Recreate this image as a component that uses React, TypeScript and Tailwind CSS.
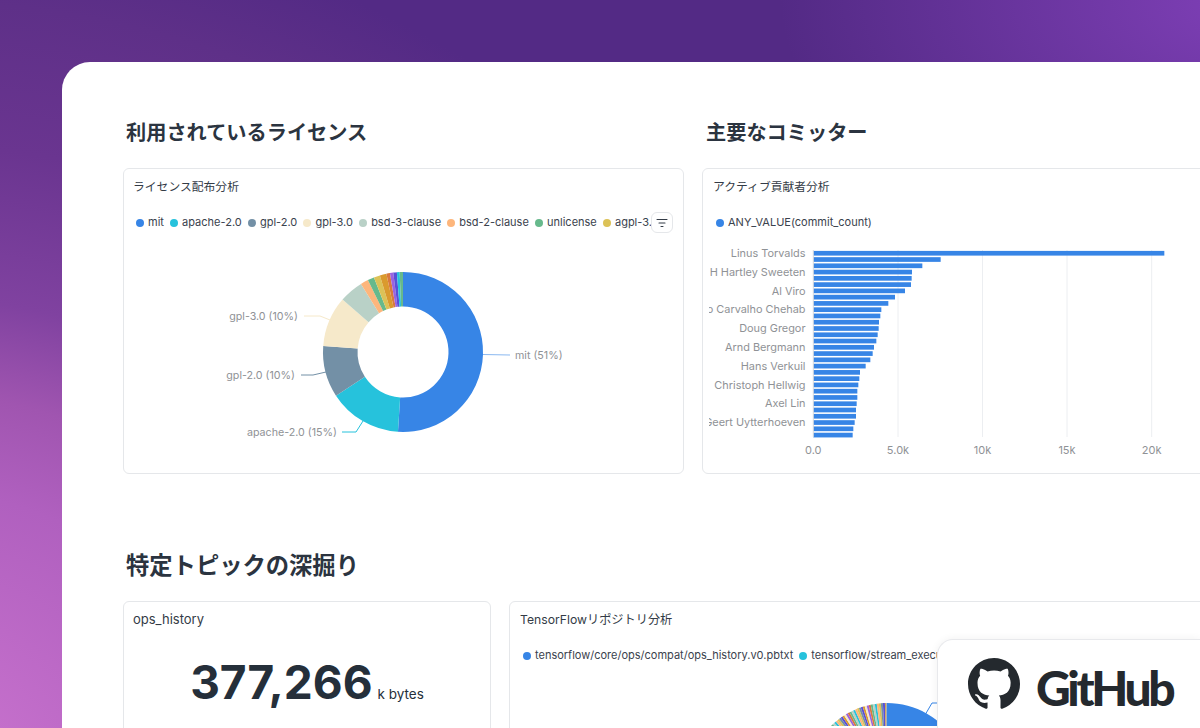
const JP = "font-['Inter','Noto_Sans_CJK_JP',sans-serif]";

const licenseLegend = [
  { name: "mit", color: "#3785e6" },
  { name: "apache-2.0", color: "#26c2dc" },
  { name: "gpl-2.0", color: "#7390a6" },
  { name: "gpl-3.0", color: "#f6e9ca" },
  { name: "bsd-3-clause", color: "#b9d1c7" },
  { name: "bsd-2-clause", color: "#fdb67c" },
  { name: "unlicense", color: "#67b98c" },
  { name: "agpl-3.0", color: "#dcc257" },
];

const licenseSlices = [
  { end: 183.6, color: "#3785e6" },
  { end: 236.9, color: "#26c2dc" },
  { end: 274.3, color: "#7390a6" },
  { end: 310.9, color: "#f6e9ca" },
  { end: 328.3, color: "#b9d1c7" },
  { end: 334, color: "#fdb67c" },
  { end: 338.7, color: "#67b98c" },
  { end: 343.2, color: "#dcc257" },
  { end: 348, color: "#da9a2e" },
  { end: 350.6, color: "#d9793e" },
  { end: 353, color: "#9a63e0" },
  { end: 355.6, color: "#5a4fd8" },
  { end: 357.6, color: "#26c2dc" },
  { end: 360, color: "#67b98c" },
];

const barEnds = [1393, 722, 667, 636, 635, 633, 615, 585, 565, 544, 541, 537, 536, 533, 529, 522, 518, 511, 497, 480, 478, 475, 472, 472, 470, 468, 468, 464, 460, 458];

const barLabels = [
  "Linus Torvalds",
  "H Hartley Sweeten",
  "Al Viro",
  "Mauro Carvalho Chehab",
  "Doug Gregor",
  "Arnd Bergmann",
  "Hans Verkuil",
  "Christoph Hellwig",
  "Axel Lin",
  "Geert Uytterhoeven",
];

const ticks = [
  { x: 813.3, label: "0.0" },
  { x: 898, label: "5.0k" },
  { x: 982.5, label: "10k" },
  { x: 1067, label: "15k" },
  { x: 1151.7, label: "20k" },
];

function arc(cx: number, cy: number, r: number, inner: number, from: number, to: number) {
  const pt = (rad: number, deg: number) => {
    const a = (deg * Math.PI) / 180;
    return `${(cx + rad * Math.sin(a)).toFixed(2)} ${(cy - rad * Math.cos(a)).toFixed(2)}`;
  };
  const large = to - from > 180 ? 1 : 0;
  return `M${pt(r, from)} A${r} ${r} 0 ${large} 1 ${pt(r, to)} L${pt(inner, to)} A${inner} ${inner} 0 ${large} 0 ${pt(inner, from)} Z`;
}

function LicenseDonut() {
  return (
    <svg viewBox="124 234 559 239" className="block w-[559px] h-[239px]">
      {licenseSlices.map((s, i) => (
        <path key={i} d={arc(403, 352, 80, 45.5, i === 0 ? 0 : licenseSlices[i - 1].end, s.end)} fill={s.color} />
      ))}
      <g fill="none" strokeWidth="1">
        <path d="M483 354.5 L510 355" stroke="#8ab8f0" />
        <path d="M304 316 L320 316 L330 320" stroke="#f6e9ca" />
        <path d="M301 375 L313 375 L326 372" stroke="#7390a6" />
        <path d="M342 432 L356 432 L363 421" stroke="#26c2dc" />
      </g>
      <g fill="#8f9296" fontSize="10.7" fontFamily="Inter, sans-serif">
        <text x="515" y="359">mit (51%)</text>
        <text x="298" y="320" textAnchor="end">gpl-3.0 (10%)</text>
        <text x="295" y="379" textAnchor="end">gpl-2.0 (10%)</text>
        <text x="337" y="436" textAnchor="end">apache-2.0 (15%)</text>
      </g>
    </svg>
  );
}

function CommitterBars() {
  return (
    <svg viewBox="709 234 491 239" className="block ml-[6px] w-[491px] h-[239px]">
      {ticks.slice(1).map((t) => (
        <line key={t.x} x1={t.x} x2={t.x} y1="250" y2="437" stroke="#eceef1" />
      ))}
      {barEnds.map((end, i) => (
        <rect key={i} x="813.3" y={250.9 + i * 6.27} width={end / 3 + 700 - 813.3} height="4.7" fill="#3785e6" />
      ))}
      <line x1="813.3" x2="813.3" y1="250" y2="437" stroke="#d5d9de" />
      <g fill="#8f9296" fontSize="10.9" fontFamily="Inter, sans-serif" textAnchor="end">
        {barLabels.map((name, i) => (
          <text key={name} x="805.5" y={257 + i * 18.79}>
            {name}
          </text>
        ))}
      </g>
      <g fill="#8f9296" fontSize="11" fontFamily="Inter, sans-serif" textAnchor="middle">
        {ticks.map((t) => (
          <text key={t.label} x={t.x} y="454">
            {t.label}
          </text>
        ))}
      </g>
    </svg>
  );
}

function RepoPie() {
  const colors = ["#da9a2e", "#dcc257", "#b9d1c7", "#9a63e0", "#5a4fd8", "#fdb67c", "#67b98c", "#f6e9ca", "#7390a6", "#26c2dc", "#d9793e"];
  const wedges = [];
  for (let i = 0; i < 34; i++) {
    wedges.push(<path key={i} d={arc(887, 785, 80, 46, 310 + i * 1.47, 310 + (i + 1) * 1.47)} fill={colors[(i * 7) % colors.length]} />);
  }
  return (
    <svg viewBox="510 669 690 59" className="block w-[690px] h-[59px]">
      {wedges}
      <path d={arc(887, 785, 80, 46, 359, 360)} fill="#aab2b8" />
      <path d={arc(887, 785, 80, 46, 0, 120)} fill="#3785e6" />
      <path d="M925 717 L932 705 L940 705" fill="none" stroke="#3785e6" />
    </svg>
  );
}

function Card({ title, titleClass, className, children }: { title: string; titleClass?: string; className?: string; children: React.ReactNode }) {
  return (
    <div className={`relative bg-white border border-[#e5e7ea] rounded-md overflow-hidden ${className ?? ""}`}>
      <div className={`pt-[9px] leading-[18px] text-[#333b46] ${titleClass ?? "px-[10px] text-[11.8px]"}`}>{title}</div>
      {children}
    </div>
  );
}

export default function App() {
  return (
    <div
      className={`h-[728px] w-[1200px] overflow-hidden pl-[62px] pt-[62px] ${JP} bg-[radial-gradient(ellipse_480px_260px_at_1260px_0px,#8040b8_0%,rgba(128,64,184,0)_100%),radial-gradient(ellipse_900px_800px_at_-100px_800px,#cb75d0_0%,#c46fcb_14%,#b060bf_39%,#a055b0_51%,#8042a0_63%,#6a3590_82%,#5e3088_100%,#532a85_112%)]`}
    >
      <div className="relative w-[1138px] h-[666px] bg-white rounded-tl-[28px] overflow-hidden">
        <div className="pl-[61px] pt-[58px]">
          <div className="grid grid-cols-[561px_561px] gap-x-[18px]">
            <h2 className="pl-[3px] text-[20.2px] leading-[26px] font-bold text-[#2b3440]">利用されているライセンス</h2>
            <h2 className="pl-[4px] text-[20.2px] leading-[26px] font-bold text-[#2b3440]">主要なコミッター</h2>
            <Card title="ライセンス配布分析" titleClass="px-[9px] text-[11.8px]" className="mt-[22px] h-[306px]">
              <div className="relative pt-[15px]">
                <div className="flex items-center gap-[6.2px] h-[23px] pl-[12px] mr-[10px] overflow-hidden text-[11px] whitespace-nowrap text-[#3a424d]">
                  {licenseLegend.map((l) => (
                    <div key={l.name} className="flex items-center shrink-0">
                      <span className="w-2 h-2 rounded-full mr-[4px]" style={{ backgroundColor: l.color }} />
                      {l.name}
                    </div>
                  ))}
                </div>
                <div className="absolute right-[10px] top-[16px] w-[22px] h-[21px] flex items-center justify-center bg-white border border-[#e5e7ea] rounded-md">
                  <svg width="12" height="10" viewBox="0 0 12 10" stroke="#333b46" strokeWidth="1.1" strokeLinecap="round">
                    <path d="M1 1.5h10M3 5h6M5 8.5h2" />
                  </svg>
                </div>
              </div>
              <LicenseDonut />
            </Card>
            <Card title="アクティブ貢献者分析" className="mt-[22px] h-[306px]">
              <div className="flex items-center h-[23px] mt-[15px] pl-[13px] text-[11px] text-[#3a424d]">
                <span className="w-2 h-2 rounded-full bg-[#3785e6] mr-[4px]" />
                ANY_VALUE(commit_count)
              </div>
              <CommitterBars />
            </Card>
          </div>
          <h2 className="mt-[77px] pl-[3px] text-[23.3px] leading-[30px] font-bold text-[#2b3440]">特定トピックの深掘り</h2>
          <div className="mt-[20px] flex gap-[18px]">
            <Card title="ops_history" titleClass="px-[9px] text-[13px] -mt-px" className="w-[368px] h-[200px] shrink-0">
              <div className="flex items-baseline justify-center mt-[26px] text-[#252f3a]">
                <span className="text-[46px] leading-[56px] font-bold">377,266</span>
                <span className="ml-[5px] text-[13.5px]">k bytes</span>
              </div>
            </Card>
            <Card title="TensorFlowリポジトリ分析" titleClass="px-[10px] text-[12.2px]" className="w-[720px] h-[200px] shrink-0">
              <div className="flex items-center h-[23px] mt-[15px] pl-[13px] gap-[6px] text-[11px] whitespace-nowrap text-[#3a424d]">
                <div className="flex items-center">
                  <span className="w-2 h-2 rounded-full bg-[#3785e6] mr-[4px]" />
                  tensorflow/core/ops/compat/ops_history.v0.pbtxt
                </div>
                <div className="flex items-center">
                  <span className="w-2 h-2 rounded-full bg-[#26c2dc] mr-[4px]" />
                  tensorflow/stream_executor
                </div>
              </div>
              <RepoPie />
            </Card>
          </div>
        </div>
      </div>
      <div className="absolute left-[937px] top-[639px] w-[263px] h-[89px] bg-white rounded-tl-[16px] border-l border-t border-[#e8e9ec] shadow-[0_0_8px_rgba(0,0,0,0.06)] flex items-start pl-[30px] pt-[18px]">
        <svg width="52" height="52" viewBox="0 0 16 16" fill="#24292e">
          <path d="M8 0C3.58 0 0 3.58 0 8c0 3.54 2.29 6.53 5.47 7.59.4.07.55-.17.55-.38 0-.19-.01-.82-.01-1.49-2.01.37-2.53-.49-2.69-.94-.09-.23-.48-.94-.82-1.13-.28-.15-.68-.52-.01-.53.63-.01 1.08.58 1.23.82.72 1.21 1.87.87 2.33.66.07-.52.28-.87.51-1.07-1.78-.2-3.64-.89-3.64-3.95 0-.87.31-1.59.82-2.15-.08-.2-.36-1.02.08-2.12 0 0 .67-.21 2.2.82.64-.18 1.32-.27 2-.27s1.36.09 2 .27c1.53-1.04 2.2-.82 2.2-.82.44 1.1.16 1.92.08 2.12.51.56.82 1.27.82 2.15 0 3.07-1.87 3.75-3.65 3.95.29.25.54.73.54 1.48 0 1.07-.01 1.93-.01 2.2 0 .21.15.46.55.38A8.01 8.01 0 0 0 16 8c0-4.42-3.58-8-8-8z" />
        </svg>
        <span className="ml-[16px] text-[48px] leading-[60px] tracking-[-3.4px] font-black text-[#24292e] font-['Lato',sans-serif]">GitHub</span>
      </div>
    </div>
  );
}
